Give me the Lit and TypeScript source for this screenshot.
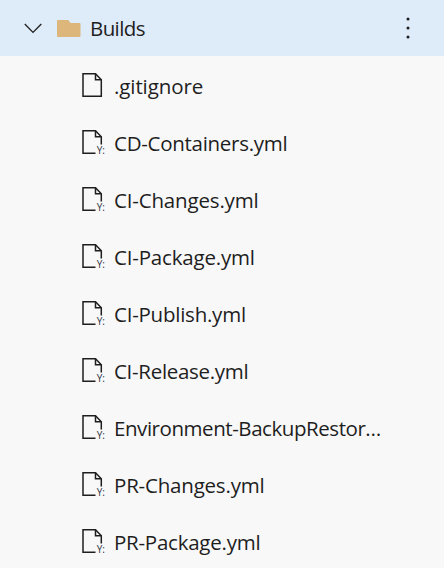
import { LitElement, html, svg, css } from "lit";
import { customElement } from "lit/decorators.js";

interface FileEntry {
  name: string;
  yaml: boolean;
  tracking: number;
}

const yml = (name: string, tracking: number): FileEntry => ({ name, yaml: true, tracking });

const FILES: FileEntry[] = [
  { name: ".gitignore", yaml: false, tracking: -0.1 },
  yml("CD-Containers.yml", -0.28),
  yml("CI-Changes.yml", -0.17),
  yml("CI-Package.yml", -0.18),
  yml("CI-Publish.yml", -0.24),
  yml("CI-Release.yml", -0.3),
  yml("Environment-BackupRestor…", -0.44),
  yml("PR-Changes.yml", -0.2),
  yml("PR-Package.yml", -0.24),
];

@customElement("app-root")
export class AppRoot extends LitElement {
  static styles = css`
    :host {
      display: block;
      box-sizing: border-box;
      width: 445px;
      height: 568px;
      overflow: hidden;
      background: #f8f8f8;
      border-right: 1px solid #fff;
      color: #1e1e1e;
      font: 400 20.5px/28px "Open Sans", "Noto Sans", sans-serif;
    }
    .folder {
      display: flex;
      align-items: center;
      height: 56px;
      padding: 0 26px 0 24px;
      box-sizing: border-box;
      background: #deebf8;
    }
    svg {
      display: block;
      flex: none;
    }
    .folder-icon {
      margin-left: 14px;
    }
    .folder-name {
      flex: 1;
      margin-left: 9px;
      letter-spacing: -0.6px;
      white-space: nowrap;
    }
    .files {
      margin: 0;
      padding: 2px 0 0;
      list-style: none;
    }
    .file {
      display: flex;
      align-items: center;
      height: 57px;
      padding-left: 82px;
      white-space: nowrap;
    }
    .file-name {
      margin-left: 6px;
      padding-bottom: 2px;
    }
    .tag {
      font: 400 10px "Open Sans", sans-serif;
      fill: #2c3440;
    }
  `;

  private fileIcon(yaml: boolean) {
    return html`<svg width="26" height="29" viewBox="0 0 26 29" fill="none" stroke="#1e1e1e" stroke-width="1.5">
      ${yaml
        ? svg`<path d="M13.5 24.2H1V1.8H13.5L19.3 7.8V15.5" /><path d="M13.5 1.8V7.8H19.3" />
            <text class="tag" x="14.7" y="24.6" stroke="none">Y:</text>`
        : svg`<path d="M1 1.8H13.5L19.3 7.8V24.2H1Z" /><path d="M13.5 1.8V7.8H19.3" />`}
    </svg>`;
  }

  render() {
    return html`
      <div class="folder">
        <svg width="19" height="12" viewBox="0 0 19 12" fill="none" stroke="#1e1e1e" stroke-width="1.3">
          <path d="M.8 2L9 10.4L17.3 2" />
        </svg>
        <svg class="folder-icon" width="24" height="18" viewBox="0 0 24 18">
          <path fill="#dcb67a" d="M1 1H11.3L13.5 4H22.5Q23.5 4 23.5 5V17Q23.5 18 22.5 18H1Q0 18 0 17V2Q0 1 1 1Z" />
        </svg>
        <span class="folder-name">Builds</span>
        <svg width="19" height="24" viewBox="0 0 19 24" fill="#1e1e1e">
          <circle cx="9" cy="3" r="1.5" />
          <circle cx="9" cy="12" r="1.5" />
          <circle cx="9" cy="21" r="1.5" />
        </svg>
      </div>
      <ul class="files">
        ${FILES.map(
          (f) => html`<li class="file">
            ${this.fileIcon(f.yaml)}
            <span class="file-name" style="letter-spacing:${f.tracking}px">${f.name}</span>
          </li>`
        )}
      </ul>
    `;
  }
}
